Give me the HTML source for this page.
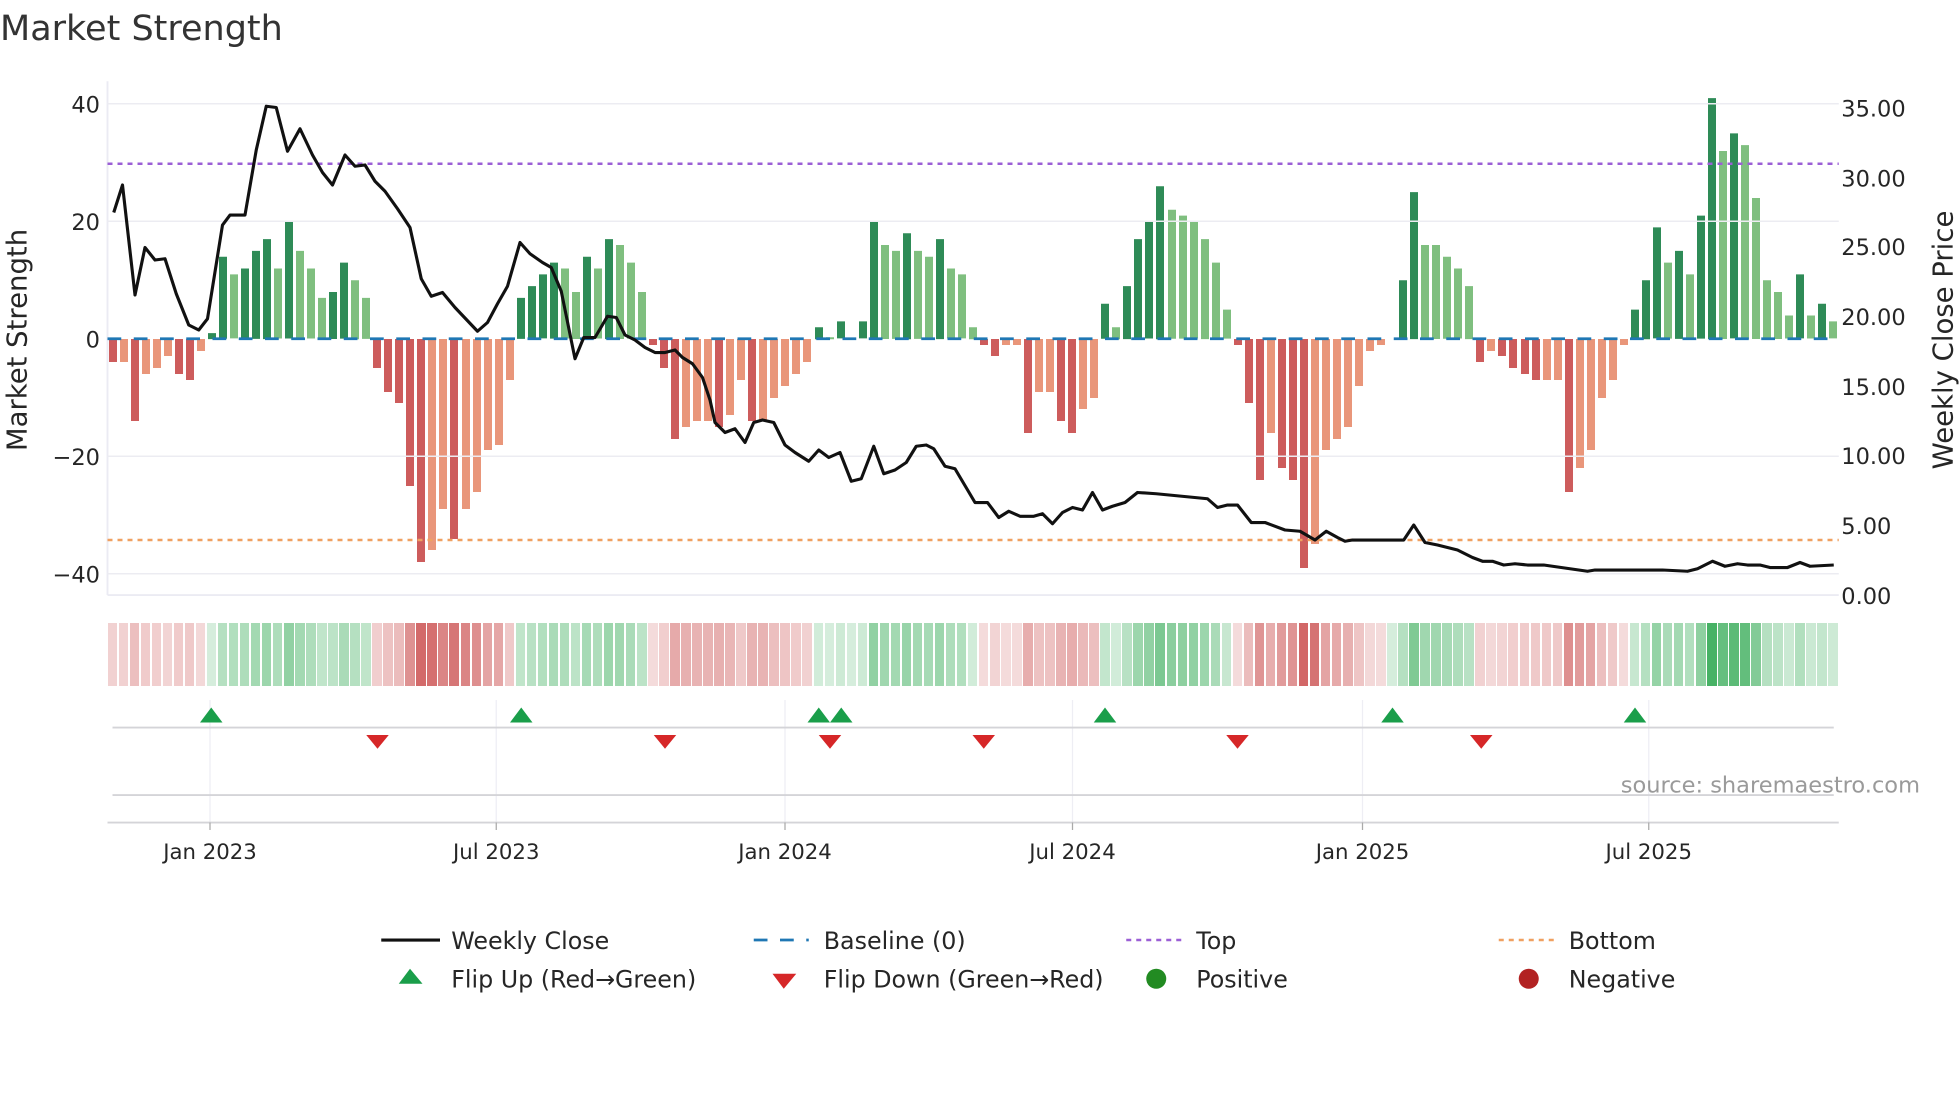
<!DOCTYPE html>
<html><head><meta charset="utf-8">
<style>
html,body{margin:0;padding:0;background:#fff;}
body{position:relative;width:1960px;height:1102px;overflow:hidden;}
svg{position:absolute;left:0;top:0;display:block;z-index:2;}
text{font-family:"DejaVu Sans","Liberation Sans",sans-serif;fill:#262626;}
.w{position:absolute;left:108.5px;top:338.75px;display:flex;align-items:flex-start;height:0;z-index:1;}
.w b{flex:none;display:block;width:8px;margin-right:3.04px;height:calc(var(--v) * 5.875px);}
.w .a{background:#2e8b57;transform:translateY(-100%);}
.w .c{background:#7fbf7f;transform:translateY(-100%);}
.w .d{background:#cd5c5c;}
.w .e{background:#e9967a;}
.s{position:absolute;left:107.5px;top:622.5px;display:flex;z-index:1;}
.s b{flex:none;display:block;width:9.5px;margin-right:1.54px;height:63.75px;opacity:calc(0.18 + var(--v) * 0.0165);}
.s .g{background:rgb(40,165,75);}
.s .r{background:rgb(200,70,70);}
</style></head>
<body>
<div class="w"><b class=d style=--v:4></b><b class=e style=--v:4></b><b class=d style=--v:14></b><b class=e style=--v:6></b><b class=e style=--v:5></b><b class=e style=--v:3></b><b class=d style=--v:6></b><b class=d style=--v:7></b><b class=e style=--v:2></b><b class=a style=--v:1></b><b class=a style=--v:14></b><b class=c style=--v:11></b><b class=a style=--v:12></b><b class=a style=--v:15></b><b class=a style=--v:17></b><b class=c style=--v:12></b><b class=a style=--v:20></b><b class=c style=--v:15></b><b class=c style=--v:12></b><b class=c style=--v:7></b><b class=a style=--v:8></b><b class=a style=--v:13></b><b class=c style=--v:10></b><b class=c style=--v:7></b><b class=d style=--v:5></b><b class=d style=--v:9></b><b class=d style=--v:11></b><b class=d style=--v:25></b><b class=d style=--v:38></b><b class=e style=--v:36></b><b class=e style=--v:29></b><b class=d style=--v:34></b><b class=e style=--v:29></b><b class=e style=--v:26></b><b class=e style=--v:19></b><b class=e style=--v:18></b><b class=e style=--v:7></b><b class=a style=--v:7></b><b class=a style=--v:9></b><b class=a style=--v:11></b><b class=a style=--v:13></b><b class=c style=--v:12></b><b class=c style=--v:8></b><b class=a style=--v:14></b><b class=c style=--v:12></b><b class=a style=--v:17></b><b class=c style=--v:16></b><b class=c style=--v:13></b><b class=c style=--v:8></b><b class=d style=--v:1></b><b class=d style=--v:5></b><b class=d style=--v:17></b><b class=e style=--v:15></b><b class=e style=--v:14></b><b class=e style=--v:14></b><b class=d style=--v:15></b><b class=e style=--v:13></b><b class=e style=--v:7></b><b class=d style=--v:14></b><b class=e style=--v:14></b><b class=e style=--v:10></b><b class=e style=--v:8></b><b class=e style=--v:6></b><b class=e style=--v:4></b><b class=a style=--v:2></b><b class=c style=--v:0.3></b><b class=a style=--v:3></b><b class=c style=--v:0></b><b class=a style=--v:3></b><b class=a style=--v:20></b><b class=c style=--v:16></b><b class=c style=--v:15></b><b class=a style=--v:18></b><b class=c style=--v:15></b><b class=c style=--v:14></b><b class=a style=--v:17></b><b class=c style=--v:12></b><b class=c style=--v:11></b><b class=c style=--v:2></b><b class=d style=--v:1></b><b class=d style=--v:3></b><b class=e style=--v:1></b><b class=e style=--v:1></b><b class=d style=--v:16></b><b class=e style=--v:9></b><b class=e style=--v:9></b><b class=d style=--v:14></b><b class=d style=--v:16></b><b class=e style=--v:12></b><b class=e style=--v:10></b><b class=a style=--v:6></b><b class=c style=--v:2></b><b class=a style=--v:9></b><b class=a style=--v:17></b><b class=a style=--v:20></b><b class=a style=--v:26></b><b class=c style=--v:22></b><b class=c style=--v:21></b><b class=c style=--v:20></b><b class=c style=--v:17></b><b class=c style=--v:13></b><b class=c style=--v:5></b><b class=d style=--v:1></b><b class=d style=--v:11></b><b class=d style=--v:24></b><b class=e style=--v:16></b><b class=d style=--v:22></b><b class=d style=--v:24></b><b class=d style=--v:39></b><b class=e style=--v:35></b><b class=e style=--v:19></b><b class=e style=--v:17></b><b class=e style=--v:15></b><b class=e style=--v:8></b><b class=e style=--v:2></b><b class=e style=--v:1></b><b class=c style=--v:0></b><b class=a style=--v:10></b><b class=a style=--v:25></b><b class=c style=--v:16></b><b class=c style=--v:16></b><b class=c style=--v:14></b><b class=c style=--v:12></b><b class=c style=--v:9></b><b class=d style=--v:4></b><b class=e style=--v:2></b><b class=d style=--v:3></b><b class=d style=--v:5></b><b class=d style=--v:6></b><b class=d style=--v:7></b><b class=e style=--v:7></b><b class=e style=--v:7></b><b class=d style=--v:26></b><b class=e style=--v:22></b><b class=e style=--v:19></b><b class=e style=--v:10></b><b class=e style=--v:7></b><b class=e style=--v:1></b><b class=a style=--v:5></b><b class=a style=--v:10></b><b class=a style=--v:19></b><b class=c style=--v:13></b><b class=a style=--v:15></b><b class=c style=--v:11></b><b class=a style=--v:21></b><b class=a style=--v:41></b><b class=c style=--v:32></b><b class=a style=--v:35></b><b class=c style=--v:33></b><b class=c style=--v:24></b><b class=c style=--v:10></b><b class=c style=--v:8></b><b class=c style=--v:4></b><b class=a style=--v:11></b><b class=c style=--v:4></b><b class=a style=--v:6></b><b class=c style=--v:3></b></div>

<div class="s"><b class=r style=--v:4></b><b class=r style=--v:4></b><b class=r style=--v:10></b><b class=r style=--v:6></b><b class=r style=--v:5></b><b class=r style=--v:3></b><b class=r style=--v:6></b><b class=r style=--v:7></b><b class=r style=--v:2></b><b class=g style=--v:1></b><b class=g style=--v:10></b><b class=g style=--v:11></b><b class=g style=--v:12></b><b class=g style=--v:15></b><b class=g style=--v:17></b><b class=g style=--v:12></b><b class=g style=--v:20></b><b class=g style=--v:15></b><b class=g style=--v:12></b><b class=g style=--v:7></b><b class=g style=--v:8></b><b class=g style=--v:13></b><b class=g style=--v:10></b><b class=g style=--v:7></b><b class=r style=--v:5></b><b class=r style=--v:9></b><b class=r style=--v:11></b><b class=r style=--v:25></b><b class=r style=--v:38></b><b class=r style=--v:36></b><b class=r style=--v:29></b><b class=r style=--v:34></b><b class=r style=--v:29></b><b class=r style=--v:26></b><b class=r style=--v:19></b><b class=r style=--v:18></b><b class=r style=--v:7></b><b class=g style=--v:7></b><b class=g style=--v:9></b><b class=g style=--v:11></b><b class=g style=--v:13></b><b class=g style=--v:12></b><b class=g style=--v:8></b><b class=g style=--v:14></b><b class=g style=--v:12></b><b class=g style=--v:17></b><b class=g style=--v:16></b><b class=g style=--v:13></b><b class=g style=--v:8></b><b class=r style=--v:1></b><b class=r style=--v:5></b><b class=r style=--v:17></b><b class=r style=--v:15></b><b class=r style=--v:14></b><b class=r style=--v:14></b><b class=r style=--v:15></b><b class=r style=--v:13></b><b class=r style=--v:7></b><b class=r style=--v:14></b><b class=r style=--v:14></b><b class=r style=--v:10></b><b class=r style=--v:8></b><b class=r style=--v:6></b><b class=r style=--v:4></b><b class=g style=--v:2></b><b class=g style=--v:1></b><b class=g style=--v:3></b><b class=g style=--v:1></b><b class=g style=--v:3></b><b class=g style=--v:20></b><b class=g style=--v:16></b><b class=g style=--v:15></b><b class=g style=--v:18></b><b class=g style=--v:15></b><b class=g style=--v:14></b><b class=g style=--v:17></b><b class=g style=--v:12></b><b class=g style=--v:11></b><b class=g style=--v:2></b><b class=r style=--v:1></b><b class=r style=--v:3></b><b class=r style=--v:1></b><b class=r style=--v:1></b><b class=r style=--v:16></b><b class=r style=--v:9></b><b class=r style=--v:9></b><b class=r style=--v:14></b><b class=r style=--v:16></b><b class=r style=--v:12></b><b class=r style=--v:10></b><b class=g style=--v:6></b><b class=g style=--v:2></b><b class=g style=--v:9></b><b class=g style=--v:17></b><b class=g style=--v:20></b><b class=g style=--v:26></b><b class=g style=--v:22></b><b class=g style=--v:21></b><b class=g style=--v:20></b><b class=g style=--v:17></b><b class=g style=--v:13></b><b class=g style=--v:5></b><b class=r style=--v:1></b><b class=r style=--v:11></b><b class=r style=--v:24></b><b class=r style=--v:16></b><b class=r style=--v:22></b><b class=r style=--v:24></b><b class=r style=--v:39></b><b class=r style=--v:35></b><b class=r style=--v:19></b><b class=r style=--v:17></b><b class=r style=--v:15></b><b class=r style=--v:8></b><b class=r style=--v:2></b><b class=r style=--v:1></b><b class=g style=--v:1></b><b class=g style=--v:10></b><b class=g style=--v:25></b><b class=g style=--v:16></b><b class=g style=--v:16></b><b class=g style=--v:14></b><b class=g style=--v:12></b><b class=g style=--v:9></b><b class=r style=--v:4></b><b class=r style=--v:2></b><b class=r style=--v:3></b><b class=r style=--v:5></b><b class=r style=--v:6></b><b class=r style=--v:7></b><b class=r style=--v:7></b><b class=r style=--v:7></b><b class=r style=--v:26></b><b class=r style=--v:22></b><b class=r style=--v:19></b><b class=r style=--v:10></b><b class=r style=--v:7></b><b class=r style=--v:1></b><b class=g style=--v:5></b><b class=g style=--v:10></b><b class=g style=--v:19></b><b class=g style=--v:13></b><b class=g style=--v:15></b><b class=g style=--v:11></b><b class=g style=--v:21></b><b class=g style=--v:41></b><b class=g style=--v:32></b><b class=g style=--v:35></b><b class=g style=--v:33></b><b class=g style=--v:24></b><b class=g style=--v:10></b><b class=g style=--v:8></b><b class=g style=--v:4></b><b class=g style=--v:11></b><b class=g style=--v:4></b><b class=g style=--v:6></b><b class=g style=--v:3></b></div>

<svg width="1960" height="1102" viewBox="0 0 1568 881.6" xmlns="http://www.w3.org/2000/svg">
<text x="0" y="32" font-size="28" style="fill:#333">Market Strength</text>
<g stroke="#ebebf3" stroke-width="1.5" fill="none">
<line x1="86" y1="65" x2="86" y2="476"/>
<line x1="86" y1="476" x2="1471" y2="476"/>
</g>
<g stroke="#ececf2" stroke-width="1.2">
<line x1="86" y1="83" x2="1471" y2="83"/>
<line x1="86" y1="177" x2="1471" y2="177"/>
<line x1="86" y1="365" x2="1471" y2="365"/>
<line x1="86" y1="459" x2="1471" y2="459"/>
</g>
<line x1="86" y1="271" x2="1471" y2="271" stroke="#1f77b4" stroke-width="2.2" stroke-dasharray="11 10"/>
<line x1="86" y1="131" x2="1471" y2="131" stroke="#9b5fd6" stroke-width="2" stroke-dasharray="4 4"/>
<line x1="86" y1="432" x2="1471" y2="432" stroke="#f0a060" stroke-width="2" stroke-dasharray="4 4"/>
<polyline fill="none" stroke="#111" stroke-width="2.5" stroke-linejoin="round" points="91,170 98,148 108,236 116,198 124,208 132,207 141,235 151,260 159,264 166,255 178,180 184,172 196,172 205,120 213,85 221,86 230,121 240,103 250,124 258,138 266,148 276,124 284,133 292,132 300,145 308,153 318,167 328,182 337,223 345,237 354,234 364,246 382,265 390,258 398,243 406,229 416,194 424,203 434,210 441,214 449,233 460,287 467,270 476,270 486,253 493,254 500,268 508,272 516,278 524,282 532,282 540,280 546,286 554,291 562,302 568,320 572,338 580,346 588,343 596,354 603,338 610,336 619,338 628,356 636,362 647,369 655,360 663,366 672,362 681,385 689,383 699,357 707,379 716,376 725,370 733,357 741,356 747,359 756,373 764,375 780,402 790,402 799,414 807,409 816,413 827,413 834,411 842,419 850,410 858,406 866,408 874,394 882,408 890,405 900,402 910,394 925,395 966,399 974,406 982,404 990,404 1001,418 1012,418 1028,424 1040,425 1052,432 1061,425 1070,430 1076,433 1082,432 1090,432 1123,432 1131,420 1140,434 1150,436 1166,440 1178,446 1186,449 1194,449 1203,452 1212,451 1222,452 1235,452 1249,454 1256,455 1270,457 1276,456 1290,456 1312,456 1330,456 1350,457 1358,455 1370,449 1380,453 1390,451 1398,452 1408,452 1416,454 1430,454 1440,450 1448,453 1467,452"/>
<g font-size="18" text-anchor="end">
<text x="80" y="90">40</text>
<text x="80" y="184">20</text>
<text x="80" y="278">0</text>
<text x="80" y="372">−20</text>
<text x="80" y="466">−40</text>
</g>
<g font-size="18">
<text x="1473" y="93">35.00</text>
<text x="1473" y="149">30.00</text>
<text x="1473" y="204">25.00</text>
<text x="1473" y="260">20.00</text>
<text x="1473" y="316">15.00</text>
<text x="1473" y="371">10.00</text>
<text x="1473" y="427">5.00</text>
<text x="1473" y="483">0.00</text>
</g>
<text transform="translate(21,272) rotate(-90)" font-size="22" text-anchor="middle">Market Strength</text>
<text transform="translate(1562,272) rotate(-90)" font-size="22" text-anchor="middle">Weekly Close Price</text>
<g stroke="#eeeef4" stroke-width="1">
<line x1="168" y1="560" x2="168" y2="658"/><line x1="397" y1="560" x2="397" y2="658"/>
<line x1="628" y1="560" x2="628" y2="658"/><line x1="858" y1="560" x2="858" y2="658"/>
<line x1="1090" y1="560" x2="1090" y2="658"/><line x1="1319" y1="560" x2="1319" y2="658"/>
</g>
<g stroke="#d4d4d8" stroke-width="1.5">
<line x1="90" y1="582" x2="1467" y2="582"/>
<line x1="90" y1="636" x2="1467" y2="636"/>
<line x1="86" y1="658" x2="1471" y2="658"/>
</g>
<g stroke="#aaa" stroke-width="1">
<line x1="168" y1="658" x2="168" y2="664"/><line x1="397" y1="658" x2="397" y2="664"/>
<line x1="628" y1="658" x2="628" y2="664"/><line x1="858" y1="658" x2="858" y2="664"/>
<line x1="1090" y1="658" x2="1090" y2="664"/><line x1="1319" y1="658" x2="1319" y2="664"/>
</g>
<g fill="#1a9e4a">
<polygon points="169,566 160,578 178,578"/>
<polygon points="417,566 408,578 426,578"/>
<polygon points="655,566 646,578 664,578"/>
<polygon points="673,566 664,578 682,578"/>
<polygon points="884,566 875,578 893,578"/>
<polygon points="1114,566 1105,578 1123,578"/>
<polygon points="1308,566 1299,578 1317,578"/>
</g>
<g fill="#d62728">
<polygon points="302,599 293,588 311,588"/>
<polygon points="532,599 523,588 541,588"/>
<polygon points="664,599 655,588 673,588"/>
<polygon points="787,599 778,588 796,588"/>
<polygon points="990,599 981,588 999,588"/>
<polygon points="1185,599 1176,588 1194,588"/>
</g>
<text x="1536" y="634" font-size="18" text-anchor="end" style="fill:#9a9a9a">source: sharemaestro.com</text>
<g font-size="17" text-anchor="middle">
<text x="168" y="687">Jan 2023</text><text x="397" y="687">Jul 2023</text>
<text x="628" y="687">Jan 2024</text><text x="858" y="687">Jul 2024</text>
<text x="1090" y="687">Jan 2025</text><text x="1319" y="687">Jul 2025</text>
</g>
<g font-size="19">
<line x1="305" y1="752" x2="352" y2="752" stroke="#111" stroke-width="2.5"/>
<text x="361" y="759">Weekly Close</text>
<line x1="603" y1="752" x2="647" y2="752" stroke="#1f77b4" stroke-width="2.2" stroke-dasharray="11 10"/>
<text x="659" y="759">Baseline (0)</text>
<line x1="901" y1="752" x2="945" y2="752" stroke="#9b5fd6" stroke-width="2" stroke-dasharray="4 4"/>
<text x="957" y="759">Top</text>
<line x1="1199" y1="752" x2="1243" y2="752" stroke="#f0a060" stroke-width="2" stroke-dasharray="4 4"/>
<text x="1255" y="759">Bottom</text>
<polygon points="328,775 319,787 338,787" fill="#1a9e4a"/>
<text x="361" y="790">Flip Up (Red→Green)</text>
<polygon points="627,791 618,779 637,779" fill="#d62728"/>
<text x="659" y="790">Flip Down (Green→Red)</text>
<circle cx="925" cy="783" r="8" fill="#228b22"/>
<text x="957" y="790">Positive</text>
<circle cx="1223" cy="783" r="8" fill="#b22222"/>
<text x="1255" y="790">Negative</text>
</g>
</svg>
</body></html>
